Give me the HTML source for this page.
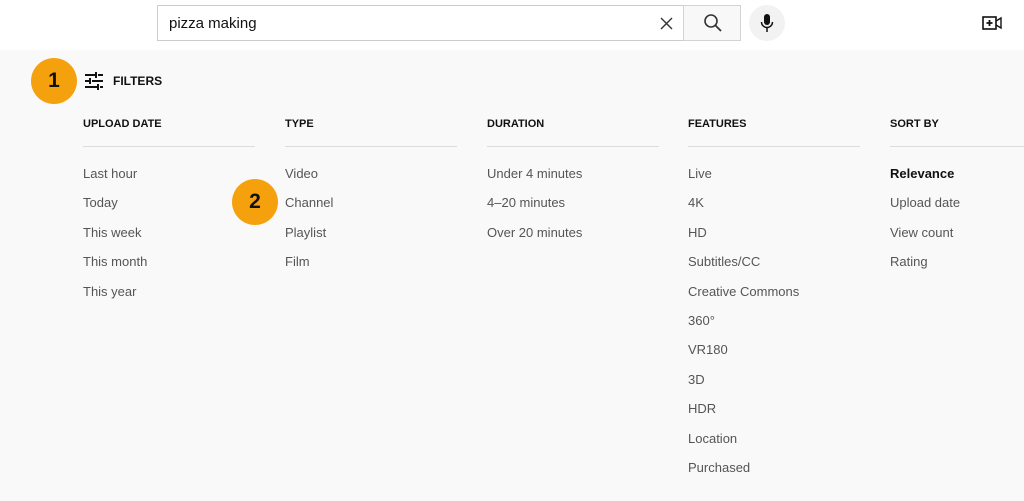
<!DOCTYPE html>
<html><head><style>
body{margin:0;width:1024px;height:501px;background:#f9f9f9;font-family:"Liberation Sans",Arial,sans-serif;position:relative;overflow:hidden}
.top{position:absolute;left:0;top:0;width:1024px;height:50px;background:#fff}
.box{position:absolute;left:157px;top:5px;width:526px;height:36px;border:1px solid #ccc;border-right:none;background:#fff;box-sizing:border-box}
.box span{position:absolute;left:11px;top:9px;font-size:15px;color:#111}
.btn{position:absolute;left:683px;top:5px;width:58px;height:36px;border:1px solid #d3d3d3;background:#f8f8f8;box-sizing:border-box}
.mic{position:absolute;left:749px;top:5px;width:36px;height:36px;border-radius:50%;background:#f2f2f2}
.circ{position:absolute;width:46px;height:46px;border-radius:50%;background:#f5a10d;color:#111;font-size:21px;font-weight:bold;text-align:center;line-height:46px}
.col{position:absolute;top:119px;width:172px}
.h{font-size:11px;font-weight:bold;color:#111;height:27px;border-bottom:1px solid #ddd;line-height:1}
.it{font-size:13px;color:#555;height:29.4px;line-height:29.4px}
.first{margin-top:12px}
</style></head><body>
<div class="top"></div>
<div class="box"><span>pizza making</span>
<svg style="position:absolute;left:502px;top:11px" width="13" height="13"><path d="M1 1L12 12M12 1L1 12" stroke="#333" stroke-width="1.4"/></svg></div>
<div class="btn"><svg style="position:absolute;left:19px;top:7px" width="20" height="20"><circle cx="8" cy="8" r="6" fill="none" stroke="#333" stroke-width="1.6"/><path d="M12.5 12.5L18 18" stroke="#333" stroke-width="1.8"/></svg></div>
<div class="mic"><svg style="position:absolute;left:10px;top:8px" width="16" height="20"><rect x="5" y="1" width="6" height="11" rx="3" fill="#111"/><path d="M2.5 9a5.5 5.5 0 0 0 11 0" fill="none" stroke="#111" stroke-width="1.5"/><path d="M8 14.5V19" stroke="#111" stroke-width="1.5"/></svg></div>
<svg style="position:absolute;left:982px;top:15px" width="22" height="16"><rect x="1" y="2" width="13" height="12" fill="none" stroke="#111" stroke-width="1.6"/><path d="M7.5 5V11M4.5 8H10.5" stroke="#111" stroke-width="1.8"/><path d="M14 6L19 3V13L14 10" fill="none" stroke="#111" stroke-width="1.4"/></svg>
<div class="circ" style="left:31px;top:58px">1</div>
<div class="circ" style="left:232px;top:179px">2</div>
<svg style="position:absolute;left:85px;top:72px" width="18" height="18"><path d="M0 3H10M13 3H18M0 9H4M7 9H18M0 15H12M15 15H18M11 0V6M5 6V12M13 12V18" stroke="#111" stroke-width="2" fill="none"/></svg>
<div style="position:absolute;left:113px;top:74px;font-size:12px;font-weight:bold;color:#111">FILTERS</div>
<div class="col" style="left:83px"><div class="h">UPLOAD DATE</div><div class="it first">Last hour</div><div class="it">Today</div><div class="it">This week</div><div class="it">This month</div><div class="it">This year</div></div>
<div class="col" style="left:285px"><div class="h">TYPE</div><div class="it first">Video</div><div class="it">Channel</div><div class="it">Playlist</div><div class="it">Film</div></div>
<div class="col" style="left:487px"><div class="h">DURATION</div><div class="it first">Under 4 minutes</div><div class="it">4–20 minutes</div><div class="it">Over 20 minutes</div></div>
<div class="col" style="left:688px"><div class="h">FEATURES</div><div class="it first">Live</div><div class="it">4K</div><div class="it">HD</div><div class="it">Subtitles/CC</div><div class="it">Creative Commons</div><div class="it">360°</div><div class="it">VR180</div><div class="it">3D</div><div class="it">HDR</div><div class="it">Location</div><div class="it">Purchased</div></div>
<div class="col" style="left:890px;width:134px"><div class="h">SORT BY</div><div class="it first" style="color:#111;font-weight:bold">Relevance</div><div class="it">Upload date</div><div class="it">View count</div><div class="it">Rating</div></div>
</body></html>
